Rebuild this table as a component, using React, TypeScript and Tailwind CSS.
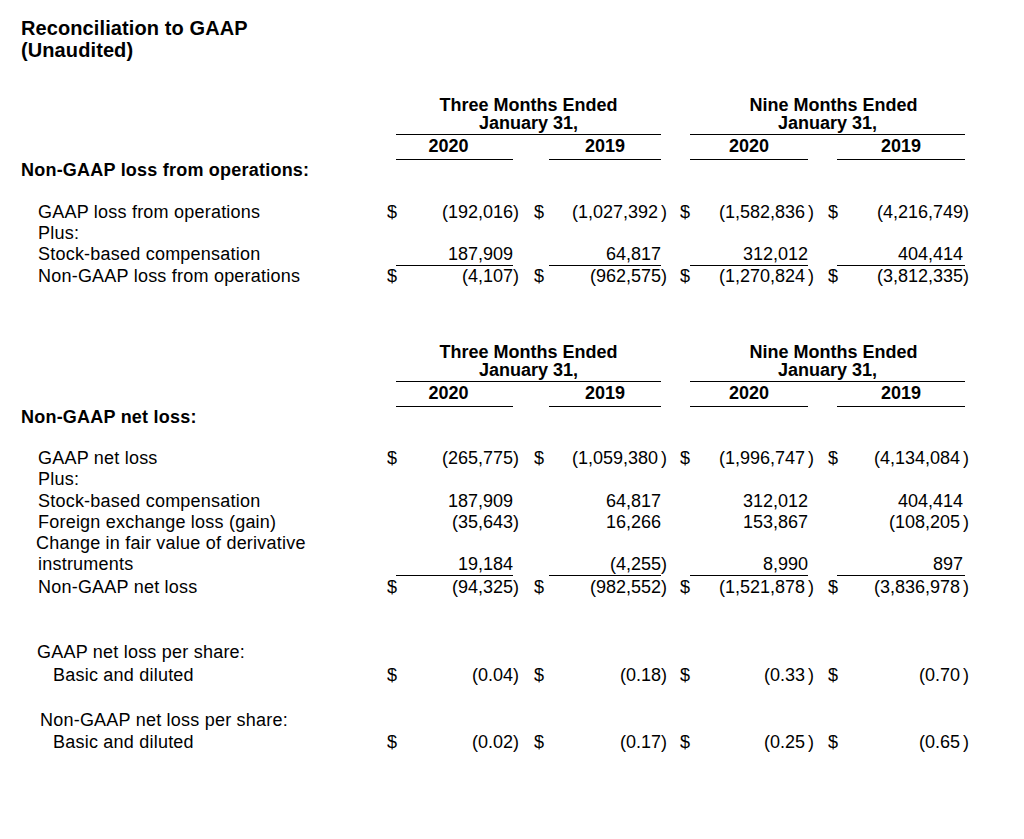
const grid =
  'grid grid-cols-[387px_9px_117px_21px_15px_112px_19px_10px_118px_20px_9px_128px_1fr]'

type RowProps = {
  label?: string
  labelClass?: string
  vals?: string[]
  dollar?: boolean
  underline?: boolean
  className?: string
}

const Amount = ({ v }: { v: string }) => {
  if (!v.startsWith('(')) return <>{v}</>
  const inner = v.slice(1, -1)
  const gap = inner.endsWith(' ')
  return (
    <span className="-mr-[6px]">
      ({inner.trim()}
      {gap && <span className="inline-block w-[3px]" />})
    </span>
  )
}

const Row = ({ label, labelClass = 'pl-[38px]', vals, dollar, underline, className = 'h-[21px]' }: RowProps) => (
  <div className={`${grid} leading-[21px] ${className}`}>
    <div className={`whitespace-nowrap tracking-[0.22px] ${labelClass}`}>{label}</div>
    {vals &&
      vals.map((v, i) => (
        <div key={i} className="contents">
          <div>{dollar ? '$' : ''}</div>
          <div
            className={`whitespace-nowrap text-right ${underline ? 'border-b border-black' : ''} ${i === 3 ? 'pr-[2px]' : ''}`}
          >
            <Amount v={v} />
          </div>
          <div />
        </div>
      ))}
  </div>
)

const Header = ({ className }: { className: string }) => (
  <div className={className}>
    <div className={`${grid} font-bold leading-[18px]`}>
      <div className="col-start-3 col-end-7 border-b border-black pb-[2px] text-center">
        Three Months Ended
        <br />
        January 31,
      </div>
      <div className="col-start-9 col-end-13 border-b border-black pb-[2px] text-center">
        <span className="pl-[12px]">Nine Months Ended</span>
        <br />
        January 31,
      </div>
    </div>
    <div className={`${grid} font-bold leading-[18px]`}>
      <div className="col-start-3 border-b border-black pb-[4px] pr-[12px] pt-[2px] text-center">2020</div>
      <div className="col-start-6 border-b border-black pb-[4px] pt-[2px] text-center">2019</div>
      <div className="col-start-9 border-b border-black pb-[4px] pt-[2px] text-center">2020</div>
      <div className="col-start-12 border-b border-black pb-[4px] pt-[2px] text-center">2019</div>
    </div>
  </div>
)

export default function App() {
  return (
    <div className="h-[839px] w-[1024px] overflow-hidden bg-white font-['Liberation_Sans',Arial,sans-serif] text-[18px] text-black">
      <div className="pl-[21px] pt-[17px] text-[20px] font-bold leading-[22px] tracking-[0.1px]">
        Reconciliation to GAAP
        <br />
        (Unaudited)
      </div>

      <Header className="mt-[35px]" />
      <Row label="Non-GAAP loss from operations:" labelClass="pl-[21px] font-bold" />
      <Row
        className="mt-[21px] h-[21px]"
        label="GAAP loss from operations"
        dollar
        vals={['(192,016)', '(1,027,392 )', '(1,582,836 )', '(4,216,749)']}
      />
      <Row label="Plus:" />
      <Row label="Stock-based compensation" underline vals={['187,909', '64,817', '312,012', '404,414']} />
      <Row
        className="mt-[1px] h-[21px]"
        label="Non-GAAP loss from operations"
        dollar
        vals={['(4,107)', '(962,575)', '(1,270,824 )', '(3,812,335)']}
      />

      <Header className="mt-[56px]" />
      <Row label="Non-GAAP net loss:" labelClass="pl-[21px] font-bold" />
      <Row
        className="mt-[20px] h-[21.3px]"
        label="GAAP net loss"
        dollar
        vals={['(265,775)', '(1,059,380 )', '(1,996,747 )', '(4,134,084 )']}
      />
      <Row className="h-[21.3px]" label="Plus:" />
      <Row className="h-[21.3px]" label="Stock-based compensation" vals={['187,909', '64,817', '312,012', '404,414']} />
      <Row className="h-[21.3px]" label="Foreign exchange loss (gain)" vals={['(35,643)', '16,266', '153,867', '(108,205 )']} />
      <Row className="h-[21.3px]" label="Change in fair value of derivative" labelClass="pl-[36px]" />
      <Row className="h-[20.5px]" label="instruments" underline vals={['19,184', '(4,255)', '8,990', '897']} />
      <Row
        className="mt-[2px] h-[21px]"
        label="Non-GAAP net loss"
        dollar
        vals={['(94,325)', '(982,552)', '(1,521,878 )', '(3,836,978 )']}
      />

      <Row className="mt-[44px] h-[21px]" label="GAAP net loss per share:" labelClass="pl-[37px]" />
      <Row
        className="mt-[2px] h-[21px]"
        label="Basic and diluted"
        labelClass="pl-[53px]"
        dollar
        vals={['(0.04)', '(0.18)', '(0.33 )', '(0.70 )']}
      />
      <Row className="mt-[24px] h-[21px]" label="Non-GAAP net loss per share:" labelClass="pl-[40px]" />
      <Row
        className="mt-[1px] h-[21px]"
        label="Basic and diluted"
        labelClass="pl-[53px]"
        dollar
        vals={['(0.02)', '(0.17)', '(0.25 )', '(0.65 )']}
      />
    </div>
  )
}
